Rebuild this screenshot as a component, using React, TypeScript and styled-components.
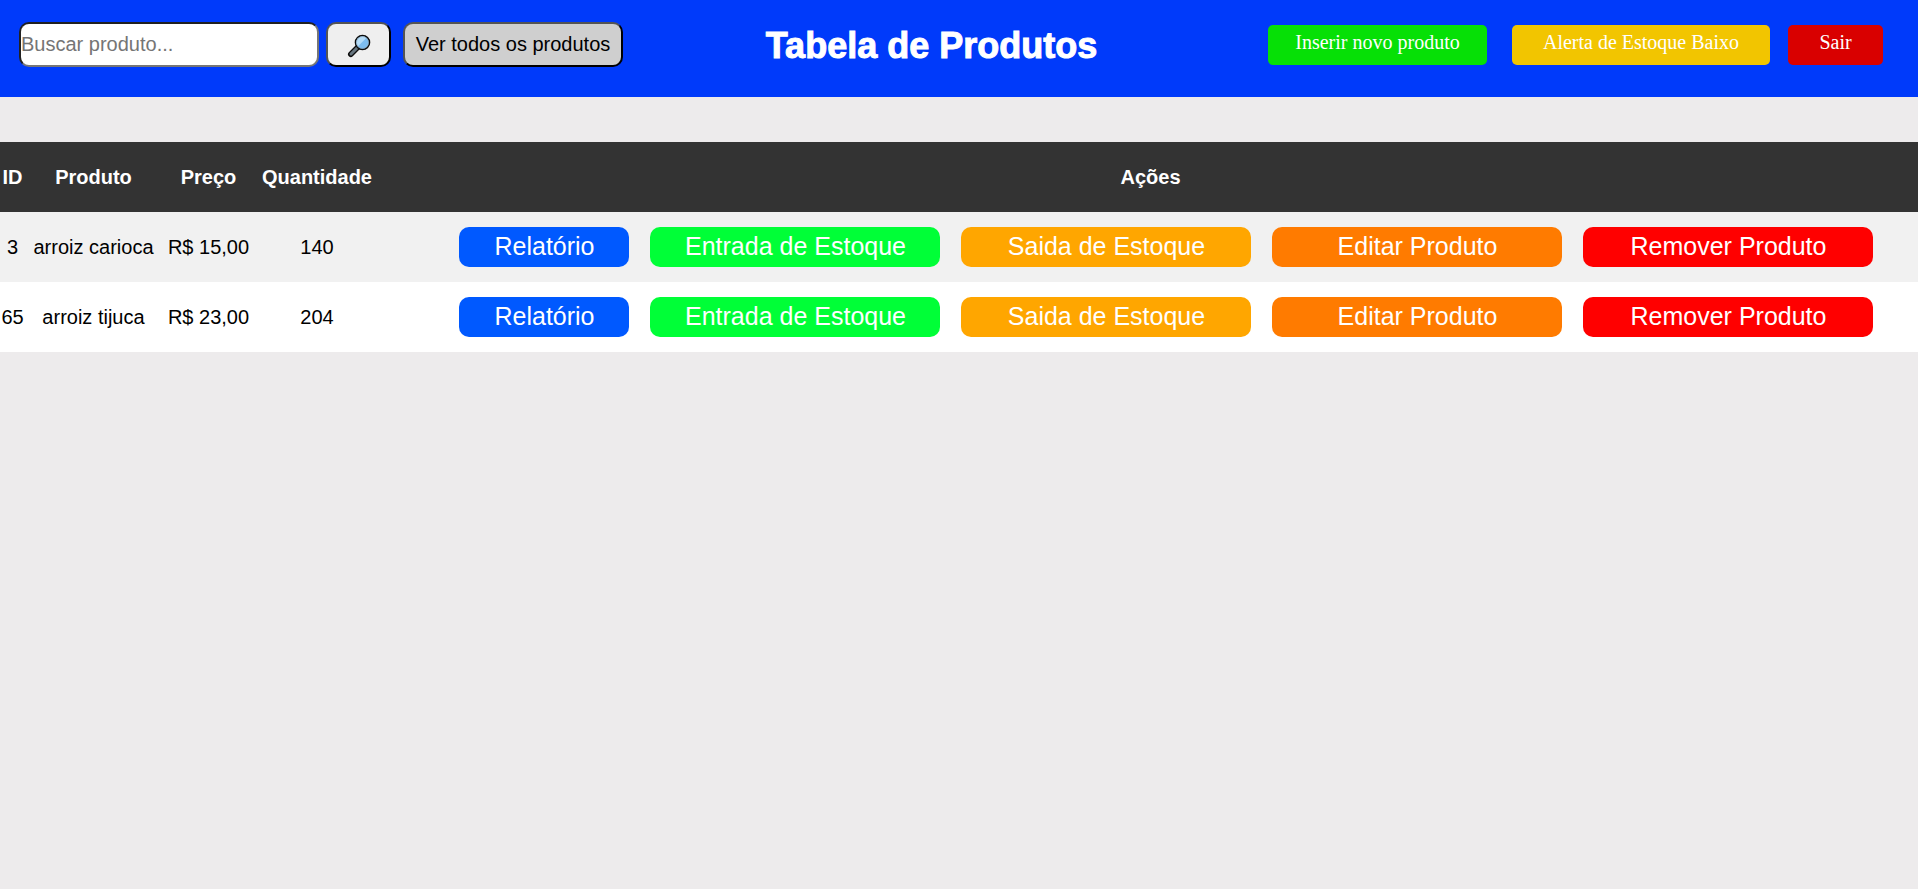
import React from "react";
import styled, { createGlobalStyle } from "styled-components";

const GlobalStyle = createGlobalStyle`
  * { box-sizing: border-box; }
  body {
    margin: 0;
    background: #edebec;
    font-family: "Liberation Sans", Arial, sans-serif;
    font-size: 20px;
    color: #000;
  }
`;

const Header = styled.header`
  display: flex;
  align-items: flex-start;
  height: 97px;
  padding: 22px 35px 0 19px;
  background: #003afa;
`;

const SearchForm = styled.form`
  display: flex;
`;

const SearchInput = styled.input`
  width: 300px;
  height: 45px;
  margin-right: 7px;
  padding: 0;
  border: 2px inset #767676;
  border-radius: 10px;
  background: #fff;
  font: inherit;
  &::placeholder { color: #757575; }
`;

const SearchButton = styled.button`
  display: flex;
  align-items: center;
  justify-content: center;
  width: 65px;
  height: 45px;
  margin-right: 12px;
  padding: 2px 0 0;
  border: 2px outset #000;
  border-radius: 10px;
  background: #efefef;
`;

const ShowAllButton = styled.button`
  width: 220px;
  height: 45px;
  padding: 0;
  border: 2px outset #000;
  border-radius: 10px;
  background: #cfcfcf;
  color: #000;
  font: inherit;
`;

const Title = styled.h1`
  flex: 1;
  margin: 0;
  text-align: center;
  white-space: nowrap;
  color: #fff;
  font-size: 36px;
  font-weight: 700;
  line-height: 48px;
  -webkit-text-stroke: 1px #fff;
`;

const Nav = styled.nav`
  display: flex;
  margin: 3px 0 0 28px;
`;

const NavLink = styled.a<{ $color: string; $width: number; $gap?: number }>`
  width: ${(p) => p.$width}px;
  height: 40px;
  margin-right: ${(p) => p.$gap ?? 0}px;
  padding-top: 5px;
  border-radius: 5px;
  background: ${(p) => p.$color};
  color: #fff;
  font-family: "Liberation Serif", "Times New Roman", serif;
  line-height: 24px;
  text-align: center;
  text-decoration: none;
  white-space: nowrap;
`;

const Table = styled.table`
  width: 100%;
  margin-top: 45px;
  border-collapse: collapse;
  table-layout: fixed;
  text-align: center;
`;

const Col = styled.col<{ $width?: number }>`
  width: ${(p) => (p.$width ? `${p.$width}px` : "auto")};
`;

const HeadRow = styled.tr`
  height: 70px;
  background: #333;
  color: #fff;
`;

const Row = styled.tr`
  height: 70px;
  background: #fff;
  &:nth-child(odd) { background: #f1f1f1; }
`;

const HeadCell = styled.th`
  padding: 0;
  &:last-child { padding-left: 4px; }
`;

const Cell = styled.td`
  padding: 0;
  white-space: nowrap;
  &:last-child { padding-left: 4px; }
`;

const Actions = styled.div`
  display: flex;
  justify-content: center;
  gap: 21px;
  padding-left: 30px;
`;

const ActionButton = styled.button<{ $color: string; $width: number }>`
  width: ${(p) => p.$width}px;
  height: 40px;
  padding: 0 0 2px 2px;
  border: 0;
  border-radius: 10px;
  background: ${(p) => p.$color};
  color: #fff;
  font: inherit;
  font-size: 25px;
`;

const MagnifierIcon = () => (
  <svg width="24" height="24" viewBox="0 0 24 24" aria-hidden="true">
    <path d="M11.5 12.5 3.8 20.2" stroke="#0c0c0c" strokeWidth="5.6" strokeLinecap="round" />
    <path d="M10.5 13.5 4 20" stroke="#66757f" strokeWidth="3" strokeLinecap="round" />
    <circle cx="15.5" cy="8.5" r="7" fill="#7dbdf0" stroke="#0c0c0c" strokeWidth="1.6" />
    <path d="M10.8 12.4A6 6 0 0 1 19.2 3.9Z" fill="#b4dcf8" />
    <circle cx="15.5" cy="8.5" r="6" fill="none" stroke="#8fa9bb" strokeWidth="0.7" />
  </svg>
);

const products = [
  { id: 3, name: "arroiz carioca", price: "R$ 15,00", quantity: 140 },
  { id: 65, name: "arroiz tijuca", price: "R$ 23,00", quantity: 204 },
];

const actions = [
  { label: "Relatório", color: "#0059ff", width: 170 },
  { label: "Entrada de Estoque", color: "#00ff37", width: 290 },
  { label: "Saida de Estoque", color: "#ffa600", width: 290 },
  { label: "Editar Produto", color: "#ff7b00", width: 290 },
  { label: "Remover Produto", color: "#ff0000", width: 290 },
];

export default function App() {
  return (
    <>
      <GlobalStyle />
      <Header>
        <SearchForm onSubmit={(e) => e.preventDefault()}>
          <SearchInput type="text" placeholder="Buscar produto..." aria-label="Buscar produto" />
          <SearchButton type="submit" aria-label="Buscar">
            <MagnifierIcon />
          </SearchButton>
          <ShowAllButton type="button">Ver todos os produtos</ShowAllButton>
        </SearchForm>
        <Title>Tabela de Produtos</Title>
        <Nav>
          <NavLink href="#inserir" $color="#06e006" $width={219} $gap={25}>Inserir novo produto</NavLink>
          <NavLink href="#alerta" $color="#f2c500" $width={258} $gap={18}>Alerta de Estoque Baixo</NavLink>
          <NavLink href="#sair" $color="#d90000" $width={95}>Sair</NavLink>
        </Nav>
      </Header>
      <main>
        <Table>
          <colgroup>
            <Col $width={25} />
            <Col $width={137} />
            <Col $width={93} />
            <Col $width={124} />
            <Col />
          </colgroup>
          <thead>
            <HeadRow>
              <HeadCell scope="col">ID</HeadCell>
              <HeadCell scope="col">Produto</HeadCell>
              <HeadCell scope="col">Preço</HeadCell>
              <HeadCell scope="col">Quantidade</HeadCell>
              <HeadCell scope="col">Ações</HeadCell>
            </HeadRow>
          </thead>
          <tbody>
            {products.map((product) => (
              <Row key={product.id}>
                <Cell>{product.id}</Cell>
                <Cell>{product.name}</Cell>
                <Cell>{product.price}</Cell>
                <Cell>{product.quantity}</Cell>
                <Cell>
                  <Actions>
                    {actions.map((action) => (
                      <ActionButton key={action.label} type="button" $color={action.color} $width={action.width}>
                        {action.label}
                      </ActionButton>
                    ))}
                  </Actions>
                </Cell>
              </Row>
            ))}
          </tbody>
        </Table>
      </main>
    </>
  );
}
